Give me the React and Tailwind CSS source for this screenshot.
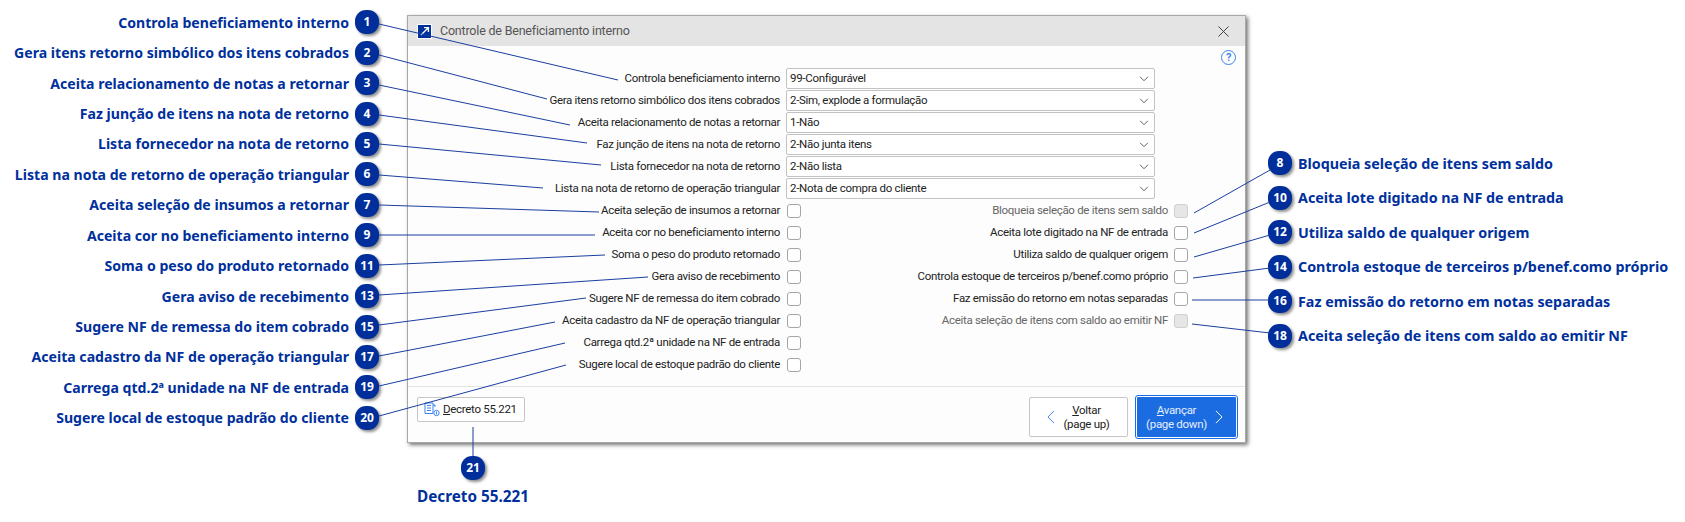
const leftCallouts = [
  ['1', 'Controla beneficiamento interno'],
  ['2', 'Gera itens retorno simbólico dos itens cobrados'],
  ['3', 'Aceita relacionamento de notas a retornar'],
  ['4', 'Faz junção de itens na nota de retorno'],
  ['5', 'Lista fornecedor na nota de retorno'],
  ['6', 'Lista na nota de retorno de operação triangular'],
  ['7', 'Aceita seleção de insumos a retornar'],
  ['9', 'Aceita cor no beneficiamento interno'],
  ['11', 'Soma o peso do produto retornado'],
  ['13', 'Gera aviso de recebimento'],
  ['15', 'Sugere NF de remessa do item cobrado'],
  ['17', 'Aceita cadastro da NF de operação triangular'],
  ['19', 'Carrega qtd.2ª unidade na NF de entrada'],
  ['20', 'Sugere local de estoque padrão do cliente'],
];

const rightCallouts = [
  ['8', 'Bloqueia seleção de itens sem saldo'],
  ['10', 'Aceita lote digitado na NF de entrada'],
  ['12', 'Utiliza saldo de qualquer origem'],
  ['14', 'Controla estoque de terceiros p/benef.como próprio'],
  ['16', 'Faz emissão do retorno em notas separadas'],
  ['18', 'Aceita seleção de itens com saldo ao emitir NF'],
];

const selects = [
  ['Controla beneficiamento interno', '99-Configurável'],
  ['Gera itens retorno simbólico dos itens cobrados', '2-Sim, explode a formulação'],
  ['Aceita relacionamento de notas a retornar', '1-Não'],
  ['Faz junção de itens na nota de retorno', '2-Não junta itens'],
  ['Lista fornecedor na nota de retorno', '2-Não lista'],
  ['Lista na nota de retorno de operação triangular', '2-Nota de compra do cliente'],
];

const leftChecks = [
  'Aceita seleção de insumos a retornar',
  'Aceita cor no beneficiamento interno',
  'Soma o peso do produto retornado',
  'Gera aviso de recebimento',
  'Sugere NF de remessa do item cobrado',
  'Aceita cadastro da NF de operação triangular',
  'Carrega qtd.2ª unidade na NF de entrada',
  'Sugere local de estoque padrão do cliente',
];

const rightChecks = [
  ['Bloqueia seleção de itens sem saldo', true],
  ['Aceita lote digitado na NF de entrada', false],
  ['Utiliza saldo de qualquer origem', false],
  ['Controla estoque de terceiros p/benef.como próprio', false],
  ['Faz emissão do retorno em notas separadas', false],
  ['Aceita seleção de itens com saldo ao emitir NF', true],
];

// leader lines from the badges to the fields
const lines = [
  [379, 24, 618, 80], [379, 55, 547, 99], [379, 85, 570, 125], [379, 115, 587, 143],
  [379, 144, 601, 165], [379, 175, 543, 188], [379, 205, 599, 212], [379, 235, 595, 235],
  [379, 265, 605, 255], [379, 295, 648, 277], [379, 325, 586, 298], [379, 356, 555, 322],
  [379, 386, 565, 343], [379, 416, 566, 365],
  [1270, 170, 1194, 213], [1270, 202, 1194, 233], [1270, 235, 1194, 257],
  [1270, 268, 1193, 278], [1270, 300, 1192, 300], [1270, 333, 1192, 324],
  [473, 427, 473, 456],
];

const Badge = ({ n }) => (
  <div className="w-6 h-6 shrink-0 rounded-[11px] bg-[#002e9b] text-white text-[12px] font-bold flex items-center justify-center shadow-[2px_2px_3px_rgba(0,0,0,0.45)] font-['Open_Sans',sans-serif]">
    {n}
  </div>
);

const CalloutText = ({ children, className = 'text-[14.1px]' }) => (
  <span className={`${className} font-bold text-[#00309c] whitespace-nowrap font-['Noto_Sans',sans-serif]`}>{children}</span>
);

const Chevron = ({ dir, className }) => {
  const d = dir === 'left' ? 'M8 1 L1 8 L8 15' : dir === 'right' ? 'M1 1 L8 8 L1 15' : 'M1 1 L5.5 5.5 L10 1';
  const box = dir === 'down' ? '0 0 11 7' : '0 0 9 16';
  return (
    <svg viewBox={box} className={className} fill="none" stroke="currentColor" strokeWidth="1.1">
      <path d={d} />
    </svg>
  );
};

const Checkbox = ({ disabled }) => (
  <div className={`w-[14px] h-[14px] shrink-0 rounded-[3px] border ${disabled ? 'bg-[#e6e6e6] border-[#cfcfcf]' : 'bg-white border-[#a6a6a6]'}`} />
);

export default function App() {
  return (
    <div className="relative w-[1685px] h-[522px] bg-white flex overflow-hidden font-['Roboto',sans-serif]">
      {/* left callouts */}
      <div className="w-[407px] shrink-0 pt-[7px] pr-[28px] flex flex-col">
        {leftCallouts.map(([n, text]) => (
          <div key={n} className="h-[30.45px] flex items-center justify-end gap-[6px]">
            <CalloutText>{text}</CalloutText>
            <Badge n={n} />
          </div>
        ))}
      </div>

      {/* dialog + callout 21 */}
      <div className="w-[839px] shrink-0 pt-[15px] flex flex-col">
        <div className="h-[428px] bg-[#fdfdfd] border border-[#a8a8a8] shadow-[2px_2px_4px_rgba(0,0,0,0.55)] flex flex-col text-[11.5px] tracking-[-0.3px] text-[#222]">
          <div className="h-[30px] shrink-0 bg-[#e4e4e4] flex items-center pl-[9px] pr-[16px] gap-2">
            <div className="w-[15px] h-[15px] bg-[#00309c] border border-white flex items-center justify-center">
              <svg viewBox="0 0 12 12" className="w-3 h-3" fill="none" stroke="white" strokeWidth="1.4">
                <path d="M2 10 L9 3 M5 2.6 H9.4 V7" />
              </svg>
            </div>
            <span className="flex-1 text-[12.5px] tracking-[-0.2px] text-[#555]">Controle de Beneficiamento interno</span>
            <svg viewBox="0 0 11 11" className="w-[11px] h-[11px] text-[#444]" fill="none" stroke="currentColor" strokeWidth="1">
              <path d="M0.5 0.5 L10.5 10.5 M10.5 0.5 L0.5 10.5" />
            </svg>
          </div>

          <div className="flex-1 flex flex-col">
            <div className="h-[22px] flex items-center justify-end pr-[9px]">
              <div className="w-[15px] h-[15px] rounded-full border border-[#3b82f0] text-[#3b82f0] text-[11px] font-semibold leading-none flex items-center justify-center">?</div>
            </div>

            <div className="flex flex-col gap-px">
              {selects.map(([label, value]) => (
                <div key={label} className="h-[21px] flex items-center gap-[6px]">
                  <div className="w-[372px] pt-px text-right whitespace-nowrap">{label}</div>
                  <div className="w-[369px] h-[21px] bg-white border border-[#c2c2c2] rounded-[2px] flex items-center justify-between pl-[3px] pr-[5px]">
                    <span className="pt-px">{value}</span>
                    <Chevron dir="down" className="w-[10px] h-[6px] text-[#555]" />
                  </div>
                </div>
              ))}
            </div>

            <div className="flex mt-[1px]">
              <div className="w-[393px] flex flex-col">
                {leftChecks.map((label) => (
                  <div key={label} className="h-[22px] flex items-center justify-end gap-[7px] whitespace-nowrap">
                    <span>{label}</span>
                    <Checkbox />
                  </div>
                ))}
              </div>
              <div className="w-[387px] flex flex-col">
                {rightChecks.map(([label, disabled]) => (
                  <div key={label} className="h-[22px] flex items-center justify-end gap-[6px] whitespace-nowrap">
                    <span className={disabled ? 'text-[#666]' : ''}>{label}</span>
                    <Checkbox disabled={disabled} />
                  </div>
                ))}
              </div>
            </div>
          </div>

          <div className="h-[56px] shrink-0 border-t border-[#e4e4e4] flex items-start pt-[10px] pl-[9px] pr-[9px]">
            <button className="w-[108px] h-[25px] bg-white border border-[#c6c6c6] rounded-[2px] flex items-center gap-[3px] pl-[6px] whitespace-nowrap">
              <svg viewBox="0 0 16 15" className="w-4 h-[15px] text-[#3b82f0] shrink-0" fill="none" stroke="currentColor" strokeWidth="1">
                <path d="M1 1 H9 V11.5 H1 Z M3 3.5 H7 M3 6 H7 M3 8.5 H7 M11 5 V3 H9" />
                <circle cx="12.5" cy="11" r="2.7" />
                <path d="M12.5 9.5 V12.5" />
              </svg>
              <span><span className="underline">D</span>ecreto 55.221</span>
            </button>
            <button className="ml-auto w-[99px] h-[40px] bg-white border border-[#c6c6c6] rounded-[2px] flex items-center justify-center gap-[8px] leading-[14px]">
              <Chevron dir="left" className="w-2 h-[14px] text-[#3b82f0]" />
              <span className="text-center"><span className="underline">V</span>oltar<br />(page up)</span>
            </button>
            <button className="ml-[9px] w-[99px] h-[40px] bg-[#1b6ce0] text-white rounded-[1px] outline outline-[#1b6ce0] outline-offset-1 flex items-center justify-center gap-[8px] pr-[4px] leading-[14px]">
              <span className="text-center text-[#e4eeff]"><span className="underline">A</span>vançar<br />(page down)</span>
              <Chevron dir="right" className="w-2 h-[14px]" />
            </button>
          </div>
        </div>

        <div className="w-[124px] ml-[4px] mt-[13px] flex flex-col items-center gap-[5px]">
          <Badge n="21" />
          <CalloutText className="text-[15.3px]">Decreto 55.221</CalloutText>
        </div>
      </div>

      {/* right callouts */}
      <div className="flex-1 pt-[146px] pl-[22px] flex flex-col">
        {rightCallouts.map(([n, text]) => (
          <div key={n} className="h-[34.5px] flex items-center gap-[6px]">
            <Badge n={n} />
            <CalloutText className="text-[14.3px]">{text}</CalloutText>
          </div>
        ))}
      </div>

      <svg className="absolute inset-0 w-full h-full pointer-events-none" viewBox="0 0 1685 522">
        {lines.map(([x1, y1, x2, y2]) => (
          <line key={`${x1}-${y1}`} x1={x1} y1={y1} x2={x2} y2={y2} stroke="#1a3f9f" strokeWidth="1" />
        ))}
      </svg>
    </div>
  );
}
